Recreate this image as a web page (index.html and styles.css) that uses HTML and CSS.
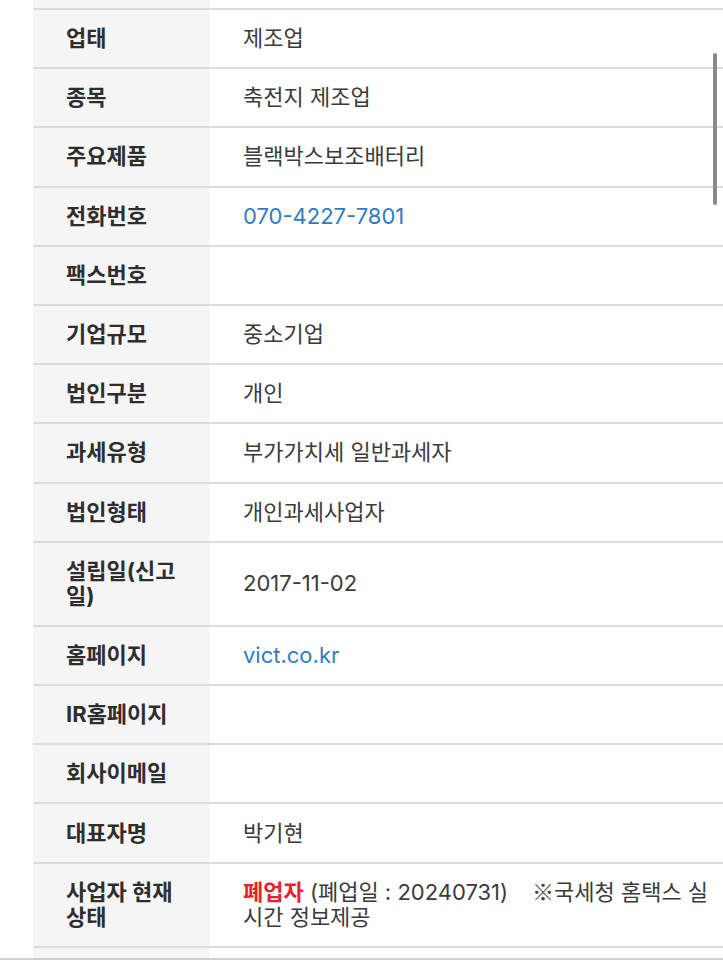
FILE: index.html
```html
<!DOCTYPE html>
<html lang="ko">
<head>
<meta charset="utf-8">
<title>기업정보</title>
<link rel="stylesheet" href="styles.css">
</head>
<body>
<div class="page">
  <table class="info">
    <colgroup>
      <col class="col-label">
      <col class="col-value">
    </colgroup>
    <tbody>
      <tr class="cut"><th></th><td></td></tr>
      <tr><th>업태</th><td>제조업</td></tr>
      <tr><th>종목</th><td>축전지 제조업</td></tr>
      <tr><th>주요제품</th><td>블랙박스보조배터리</td></tr>
      <tr><th>전화번호</th><td><a class="link" href="#">070-4227-7801</a></td></tr>
      <tr><th>팩스번호</th><td></td></tr>
      <tr><th>기업규모</th><td>중소기업</td></tr>
      <tr><th>법인구분</th><td>개인</td></tr>
      <tr><th>과세유형</th><td>부가가치세 일반과세자</td></tr>
      <tr><th>법인형태</th><td>개인과세사업자</td></tr>
      <tr><th>설립일(신고일)</th><td>2017-11-02</td></tr>
      <tr><th>홈페이지</th><td><a class="link" href="#">vict.co.kr</a></td></tr>
      <tr><th>IR홈페이지</th><td></td></tr>
      <tr><th>회사이메일</th><td></td></tr>
      <tr><th>대표자명</th><td>박기현</td></tr>
      <tr><th>사업자 현재 상태</th><td><span class="closed">폐업자</span> (폐업일 : 20240731)<span class="note">※국세청 홈택스 실시간 정보제공</span></td></tr>
      <tr class="cut"><th></th><td></td></tr>
    </tbody>
  </table>
</div>
<div class="scrollbar"></div>
<div class="bottom-line"></div>
</body>
</html>
```

FILE: styles.css
```css
html, body {
  margin: 0;
  padding: 0;
  background: #ffffff;
}

body {
  font-family: "Inter", "Noto Sans CJK KR", sans-serif;
  font-size: 22px;
  color: #333333;
  overflow: hidden;
}

.page {
  padding-left: 33px;
}

.info {
  width: 690px;
  border-collapse: collapse;
  table-layout: fixed;
}

.col-label {
  width: 177px;
}

.info th,
.info td {
  border-bottom: 2px solid #dcdcdc;
  padding: 16.1px 6px 16.1px 33px;
  line-height: 25px;
  vertical-align: middle;
  text-align: left;
}

.info th {
  background: #f5f5f5;
  font-weight: 700;
  color: #2e2e2e;
  padding-right: 20px;
}

.info td {
  color: #3b3b3b;
  font-weight: 400;
}

.info tr.cut th,
.info tr.cut td {
  height: 8px;
  padding: 0;
  line-height: 0;
}

.info tr.cut:last-child th,
.info tr.cut:last-child td {
  border-bottom: none;
  height: 14px;
}

.link {
  color: #2f7cc3;
  text-decoration: none;
}

.closed {
  color: #e3262b;
  font-weight: 700;
}

.note {
  margin-left: 24px;
  font-family: "Noto Sans CJK KR", sans-serif;
  line-height: 20px;
}

.scrollbar {
  position: fixed;
  top: 53px;
  right: 6px;
  width: 4px;
  height: 152px;
  border-radius: 2px;
  background: #8a8a8a;
}

.bottom-line {
  position: fixed;
  left: 0;
  right: 0;
  bottom: 0;
  height: 2px;
  background: #cfcfcf;
}
```
